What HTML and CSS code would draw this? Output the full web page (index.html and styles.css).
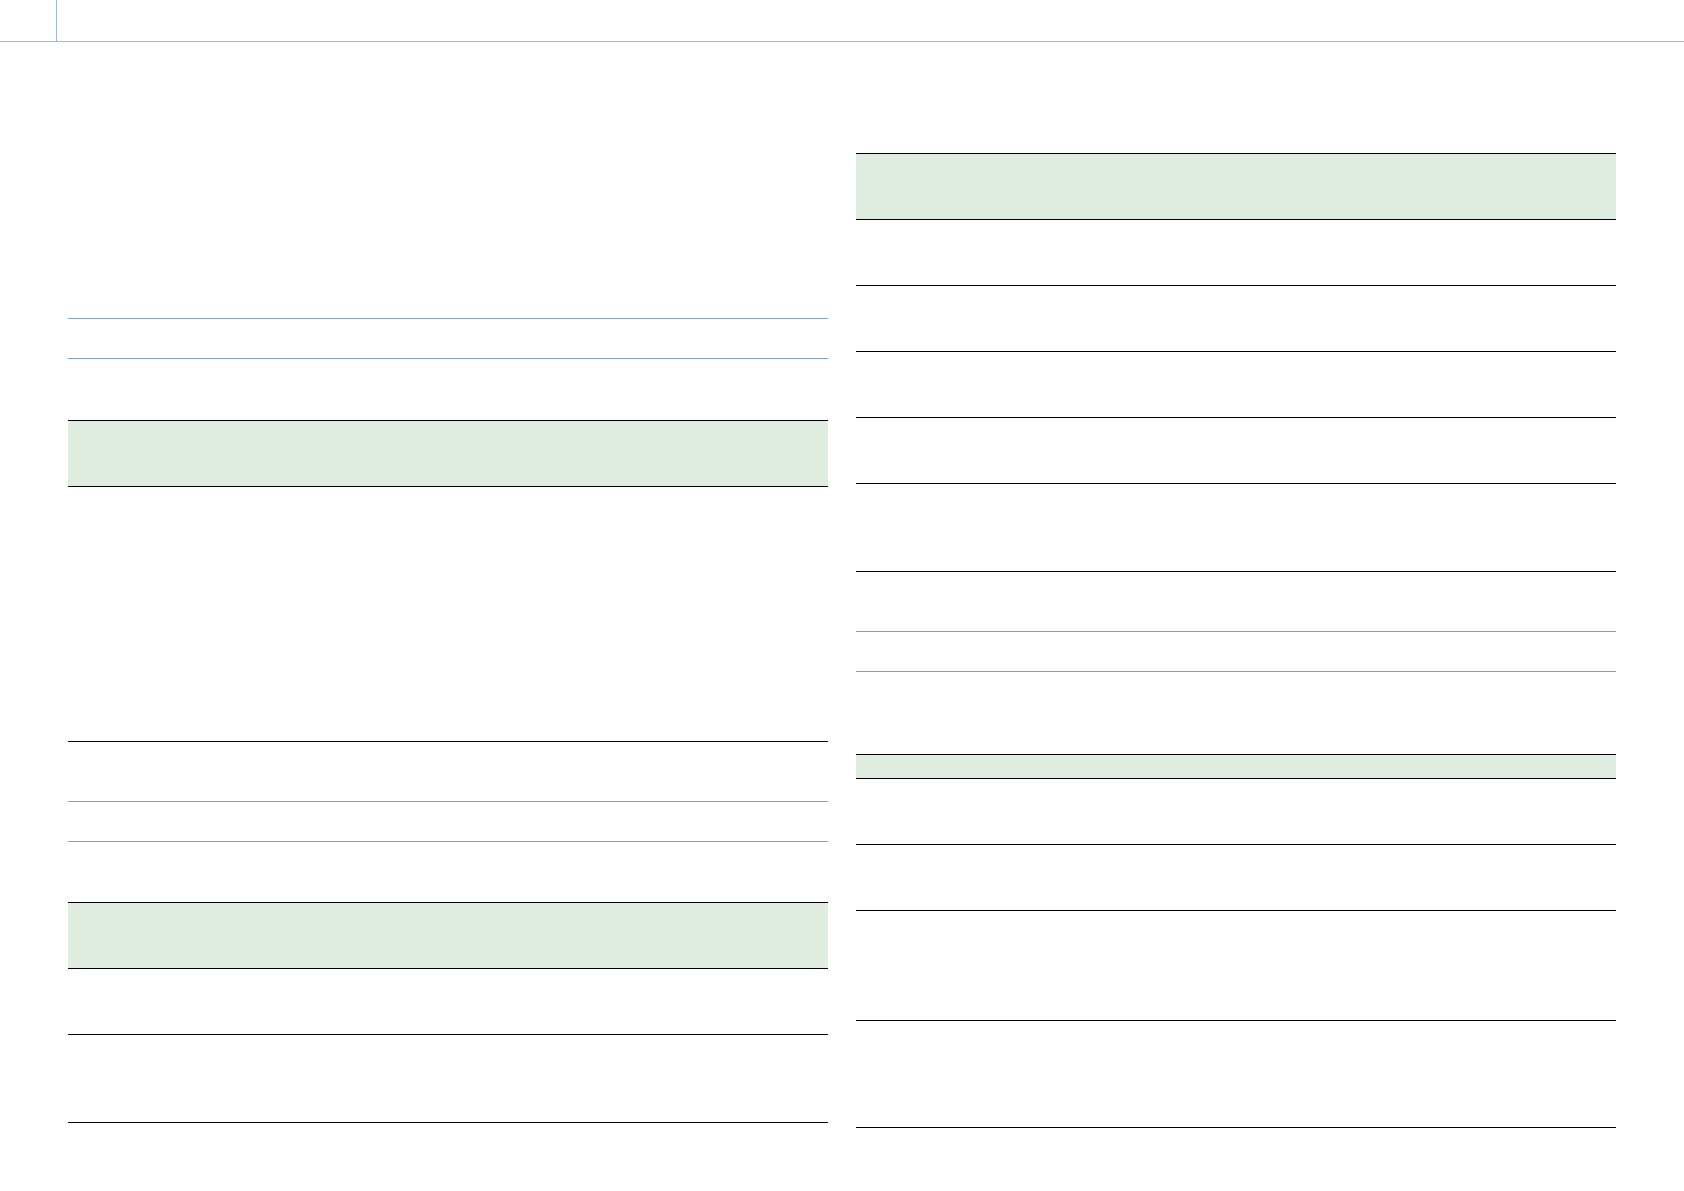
FILE: index.html
```html
<!DOCTYPE html>
<html lang="en">
<head>
<meta charset="utf-8">
<title>Page</title>
<link rel="stylesheet" href="styles.css">
</head>
<body>
<header class="topbar">
  <div class="topbar-tab"></div>
  <div class="topbar-rest"></div>
</header>
<main class="page">
  <section class="col">
    <div class="section-heading sh-left-1"></div>
    <div class="table gap-61">
      <div class="thead h65"></div>
      <div class="trow h254"></div>
    </div>
    <div class="section-heading gap-59"></div>
    <div class="table gap-60">
      <div class="thead h65"></div>
      <div class="trow h65"></div>
      <div class="trow h87"></div>
    </div>
  </section>
  <section class="col">
    <div class="table gap-111">
      <div class="thead h65"></div>
      <div class="trow h65"></div>
      <div class="trow h65"></div>
      <div class="trow h65"></div>
      <div class="trow h65"></div>
      <div class="trow h87"></div>
    </div>
    <div class="section-heading gap-59"></div>
    <div class="table gap-82">
      <div class="thead h23"></div>
      <div class="trow h65"></div>
      <div class="trow h65"></div>
      <div class="trow h109"></div>
      <div class="trow h106"></div>
    </div>
  </section>
</main>
</body>
</html>
```
FILE: styles.css
```css
html, body {
  margin: 0;
  padding: 0;
  background: #ffffff;
  font-family: "Liberation Sans", Arial, sans-serif;
}

.topbar {
  display: flex;
  height: 41px;
  border-bottom: 1px solid #9fb5ea;
}

.topbar-tab {
  width: 56px;
  border-right: 1px solid #9fb5ea;
}

.topbar-rest {
  flex: 1;
}

.page {
  display: flex;
  gap: 28px;
  padding-left: 68px;
}

.col {
  width: 760px;
  display: flex;
  flex-direction: column;
}

.section-heading {
  height: 39px;
  border-top: 1px solid #7f9dd8;
  border-bottom: 1px solid #7f9dd8;
}

.sh-left-1 { margin-top: 276px; }

.table {
  border-top: 1px solid #000000;
}

.thead {
  background: #dfede0;
  border-bottom: 1px solid #000000;
}

.trow {
  border-bottom: 1px solid #000000;
}

.gap-59 { margin-top: 59px; }
.gap-60 { margin-top: 60px; }
.gap-61 { margin-top: 61px; }
.gap-82 { margin-top: 82px; }
.gap-111 { margin-top: 111px; }

.h23 { height: 23px; }
.h65 { height: 65px; }
.h87 { height: 87px; }
.h106 { height: 106px; }
.h109 { height: 109px; }
.h254 { height: 254px; }
```
